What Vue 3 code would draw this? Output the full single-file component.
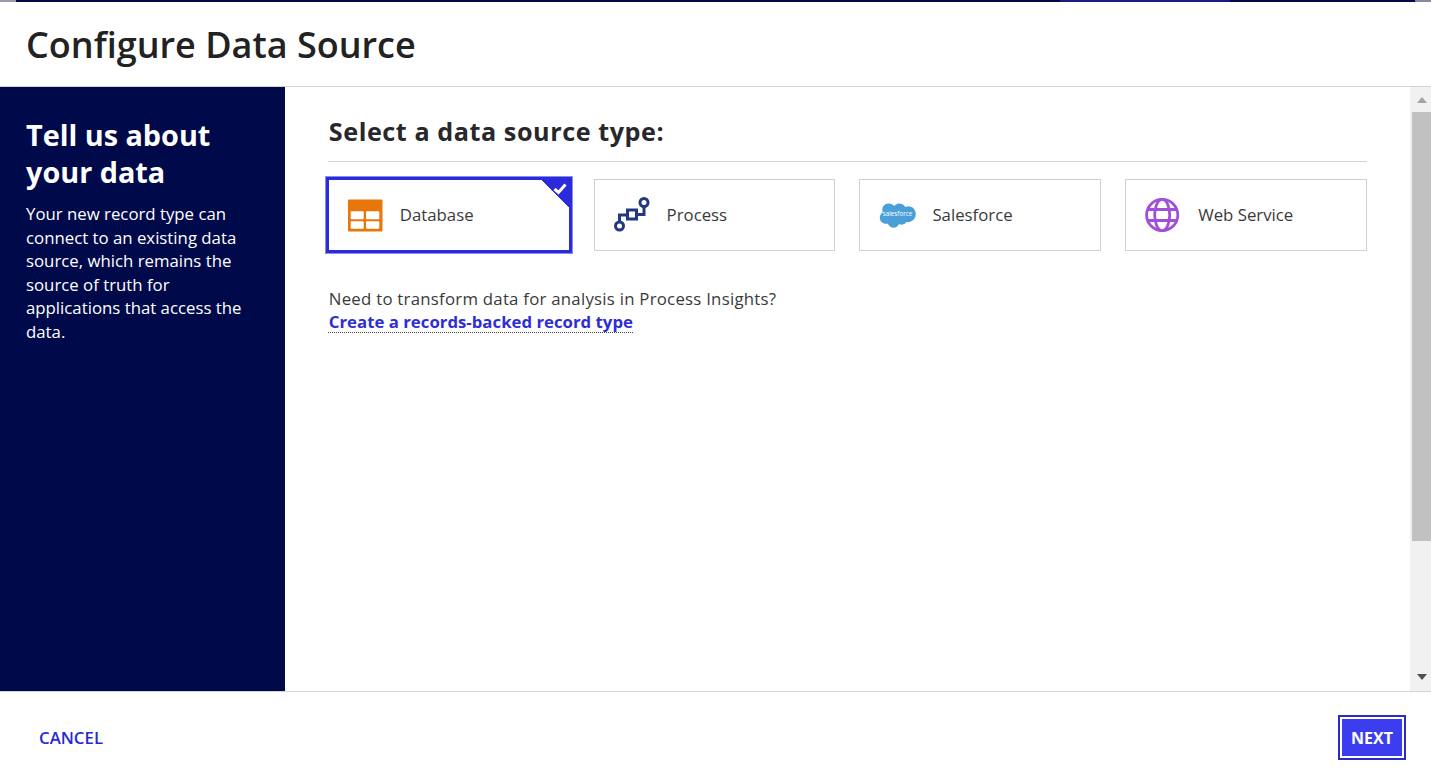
<template>
  <div class="dialog">
    <div class="top-strip"></div>
    <header class="dialog-header">
      <h1>Configure Data Source</h1>
    </header>

    <div class="dialog-main">
      <aside class="side">
        <h2>Tell us about your data</h2>
        <p>Your new record type can connect to an existing data source, which remains the source of truth for applications that access the data.</p>
      </aside>

      <section class="content">
        <h3>Select a data source type:</h3>
        <div class="cards">
          <div v-for="item in sources" :key="item.name" class="card" :class="{ selected: item.selected }">
            <span class="card-icon">
              <svg v-if="item.name === 'Database'" width="36" height="33" viewBox="0 0 36 33">
                <rect x="1" y="0.5" width="34.500" height="32" rx="1" fill="#e8760a" />
                <rect x="3.700" y="12.200" width="13" height="8" rx="1" fill="#fff" />
                <rect x="19" y="12.200" width="13.300" height="8" rx="1" fill="#fff" />
                <rect x="3.700" y="22.200" width="13" height="7.500" rx="1" fill="#fff" />
                <rect x="19" y="22.200" width="13.300" height="7.500" rx="1" fill="#fff" />
              </svg>
              <svg v-else-if="item.name === 'Process'" width="36" height="36" viewBox="0 0 36 36" fill="none" stroke="#23397f" stroke-width="3">
                <circle cx="5.500" cy="29" r="4" />
                <circle cx="30" cy="5.500" r="4" />
                <rect x="13.500" y="13" width="9" height="9" />
                <path d="M5.500 25V18H13.500M22.500 17.500H30V9.500" />
              </svg>
              <svg v-else-if="item.name === 'Salesforce'" width="37" height="25" viewBox="0 0 38 26">
                <path d="M15.600 3.200C16.900 1.500 18.800.6 20.900.6c2.600 0 4.900 1.400 6.100 3.600 1-.4 2.100-.7 3.200-.7 4.600 0 7.800 3.800 7.800 8 0 5-3.800 8.400-8.200 8.400-.6 0-1.100-.1-1.700-.2-1 1.800-2.900 2.800-5 2.800-.9 0-1.700-.2-2.500-.6-1 2.300-3.200 3.800-5.700 3.800-2.700 0-5-1.700-5.900-4.100-.4.1-.8.1-1.200.1C3.400 21.700.6 18.900.6 15.300c0-2.400 1.300-4.500 3.200-5.600-.4-.9-.6-1.900-.6-3C3.200 3.100 6.200.4 9.800.4c2.300 0 4.400 1.100 5.800 2.800z" fill="#4a9fd8" />
                <text x="19" y="14" class="sf-text" text-anchor="middle">salesforce</text>
              </svg>
              <svg v-else width="36" height="36" viewBox="0 0 36 36" fill="none" stroke="#a04fdc" stroke-width="2.800">
                <circle cx="17.200" cy="18" r="15.600" />
                <ellipse cx="17.200" cy="18" rx="7.500" ry="15.600" />
                <path d="M3 12.500H31.500M3 23.500H31.500" />
              </svg>
            </span>
            <span class="card-label">{{ item.name }}</span>
            <span v-if="item.selected" class="corner">
              <svg width="14" height="12" viewBox="0 0 14 12" fill="none" stroke="#fff" stroke-width="3">
                <path d="M1.500 6L5.500 9.500L12.500 1.500" />
              </svg>
            </span>
          </div>
        </div>
        <p class="transform-note">Need to transform data for analysis in Process Insights?</p>
        <a class="records-link">Create a records-backed record type</a>
      </section>

      <div class="scrollbar">
        <div class="arrow up"></div>
        <div class="track">
          <div class="thumb"></div>
        </div>
        <div class="arrow down"></div>
      </div>
    </div>

    <footer class="dialog-footer">
      <a class="cancel">CANCEL</a>
      <button class="next">NEXT</button>
    </footer>
  </div>
</template>

<script setup>
const sources = [
  { name: "Database", selected: true },
  { name: "Process" },
  { name: "Salesforce" },
  { name: "Web Service" },
];
</script>

<style>
html,
body {
  margin: 0;
  background: #fff;
  overflow: hidden;
}
</style>

<style scoped>
.dialog {
  width: 1431px;
  height: 780px;
  display: flex;
  flex-direction: column;
  background: #fff;
  font-family: "Open Sans", "Noto Sans", sans-serif;
  color: #2e2e35;
}

.top-strip {
  height: 2px;
  background: linear-gradient(
    to right,
    #9a9ab0 0 16px,
    #000a4a 16px 1060px,
    #1a1a80 1060px 1230px,
    #000a4a 1230px 1415px,
    #8a8a9a 1415px
  );
}

.dialog-header {
  height: 84px;
  display: flex;
  align-items: center;
  padding-left: 26px;
  border-bottom: 1px solid #d4d4d4;
}

.dialog-header h1 {
  margin: 0;
  font-size: 36px;
  font-weight: 600;
  color: #222;
}

.dialog-main {
  flex: 1;
  min-height: 0;
  display: flex;
}

.side {
  width: 285px;
  flex-shrink: 0;
  box-sizing: border-box;
  padding: 29px 26px 0;
  background: #000a4a;
  color: #fff;
}

.side h2 {
  margin: 0 0 12px;
  font-size: 28.800px;
  line-height: 37px;
  font-weight: 700;
}

.side p {
  margin: 0;
  font-size: 16.800px;
  line-height: 23.600px;
}

.content {
  flex: 1;
  padding: 24px 43px 0 42.800px;
}

.content h3 {
  margin: 0;
  padding-bottom: 10px;
  font-size: 25.200px;
  letter-spacing: 0.55px;
  text-indent: 1px;
  line-height: 40px;
  font-weight: 700;
  color: #28282c;
  border-bottom: 1px solid #d4d4d4;
}

.cards {
  display: grid;
  grid-template-columns: repeat(4, 1fr);
  gap: 24px;
  margin-top: 17px;
}

.card {
  position: relative;
  height: 72px;
  box-sizing: border-box;
  display: flex;
  align-items: center;
  gap: 16px;
  padding-left: 18px;
  border: 1px solid #d0d0d0;
  background: #fff;
}

.card.selected {
  border-color: #2b2bdc;
  box-shadow: 0 0 0 2px #2b2bdc, 0 0 0 3px #8b8bf0;
  padding-left: 17px;
}

.card-icon {
  width: 38px;
  display: flex;
  justify-content: center;
  align-items: center;
}

.card-label {
  padding-bottom: 2px;
  font-size: 16.800px;
  color: #3a3a3a;
}

.corner {
  position: absolute;
  top: -3px;
  right: -3px;
  width: 34px;
  height: 34px;
  background: linear-gradient(45deg, transparent 50%, #2b2bdc 50%);
}

.corner svg {
  position: absolute;
  top: 6px;
  right: 5px;
}

.sf-text {
  font-size: 6.500px;
  fill: #fff;
  font-family: "Open Sans", sans-serif;
}

.transform-note {
  margin: 36px 0 0;
  padding-left: 1px;
  font-size: 16.800px;
  letter-spacing: 0.25px;
  line-height: 23px;
  color: #3a3a3a;
}

.records-link {
  display: inline-block;
  margin-top: 1px;
  padding-left: 1px;
  font-size: 16.800px;
  line-height: 21px;
  font-weight: 700;
  color: #2e2ed6;
  border-bottom: 1px dotted #444;
}

.scrollbar {
  width: 21px;
  flex-shrink: 0;
  display: flex;
  flex-direction: column;
  background: #f1f1f1;
}

.arrow {
  height: 25px;
  padding-left: 3px;
  display: flex;
  align-items: center;
  justify-content: center;
}

.arrow.down {
  padding-bottom: 3px;
  height: 22px;
}

.arrow::before {
  content: "";
  border-left: 5.500px solid transparent;
  border-right: 5.500px solid transparent;
}

.arrow.up::before {
  border-bottom: 6px solid #a3a3a3;
}

.arrow.down::before {
  border-top: 6px solid #505050;
}

.track {
  flex: 1;
  padding-left: 2px;
}

.thumb {
  height: 429px;
  background: #c1c1c1;
}

.dialog-footer {
  height: 89px;
  flex-shrink: 0;
  box-sizing: border-box;
  display: flex;
  align-items: center;
  justify-content: space-between;
  padding: 3px 25px 0 39px;
  border-top: 1px solid #d4d4d4;
}

.cancel {
  font-size: 16.800px;
  font-weight: 600;
  color: #2a2ad0;
}

.next {
  width: 68px;
  height: 45px;
  box-sizing: border-box;
  border: 2px solid #fff;
  outline: 2px solid #2b2bc8;
  outline-offset: -2px;
  box-shadow: inset 0 0 0 2px #fff;
  background: #3d3df0;
  color: #fff;
  font-family: inherit;
  font-size: 16px;
  font-weight: 700;
}
</style>
